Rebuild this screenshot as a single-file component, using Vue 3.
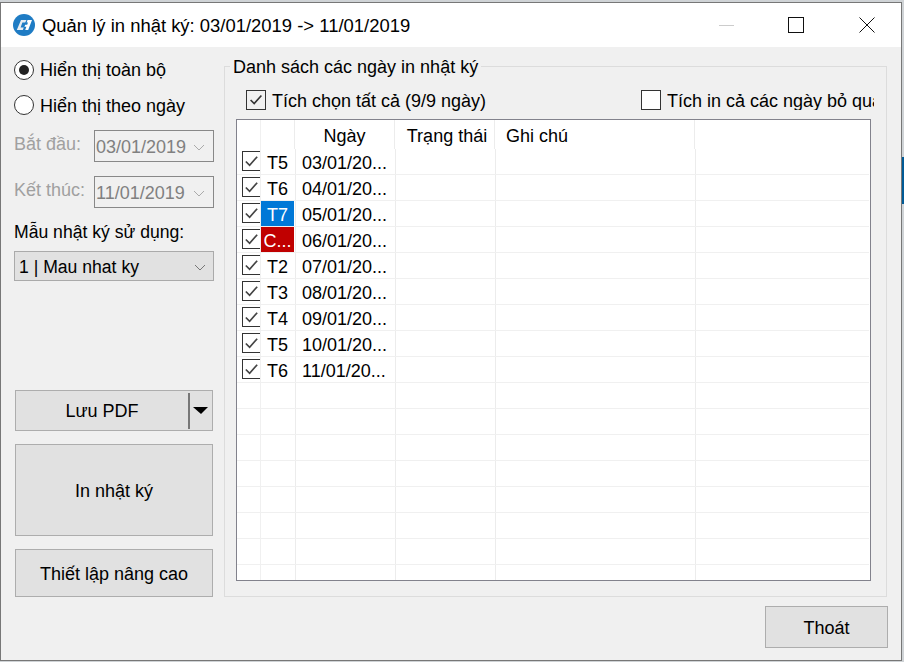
<script setup>
const rows = [
  { d: 'T5', date: '03/01/20...' },
  { d: 'T6', date: '04/01/20...' },
  { d: 'T7', date: '05/01/20...', cls: 'sat' },
  { d: 'C...', date: '06/01/20...', cls: 'sun' },
  { d: 'T2', date: '07/01/20...' },
  { d: 'T3', date: '08/01/20...' },
  { d: 'T4', date: '09/01/20...' },
  { d: 'T5', date: '10/01/20...' },
  { d: 'T6', date: '11/01/20...' },
  {}, {}, {}, {}, {}, {}, {}, {},
]
</script>

<template>
  <div class="screen">
    <div class="window">
      <header class="titlebar">
        <svg class="logo" viewBox="0 0 22 22" width="22" height="22">
          <circle cx="11" cy="11" r="11" fill="#1f7cc4" />
          <path d="M8 6h5.500l-1.300 2.600H9.400L7.600 13.400h3.200l-1 2.600H3.800z" fill="#e8edf2" />
          <path d="M14.500 6H19l-3.800 10h-3l1.200-3.200h-2l.8-2.100h2l.8-2.100h-1.300z" fill="#fff" />
        </svg>
        <span class="title">Quản lý in nhật ký: 03/01/2019 -&gt; 11/01/2019</span>
        <span class="wbtn min"></span>
        <span class="wbtn max"></span>
        <svg class="close" viewBox="0 0 16 16" width="16" height="16">
          <path d="M.5.500l15 15M15.500.500l-15 15" stroke="#111" fill="none" />
        </svg>
      </header>
      <div class="body">
        <div class="main">
          <aside class="left">
            <label class="radio first"><span class="dot on"></span>Hiển thị toàn bộ</label>
            <label class="radio second"><span class="dot"></span><span class="radiotext">Hiển thị theo ngày</span></label>
            <div class="daterow">
              <span class="lbl">Bắt đầu:</span>
              <span class="datebox">03/01/2019<svg class="chev" viewBox="0 0 12 7" width="12" height="7"><path d="M1 1l5 5 5-5" stroke="#aaa" fill="none" /></svg></span>
            </div>
            <div class="daterow low">
              <span class="lbl">Kết thúc:</span>
              <span class="datebox">11/01/2019<svg class="chev" viewBox="0 0 12 7" width="12" height="7"><path d="M1 1l5 5 5-5" stroke="#aaa" fill="none" /></svg></span>
            </div>
            <div class="tpl">Mẫu nhật ký sử dụng:</div>
            <div class="select">1 | Mau nhat ky<svg class="chev" viewBox="0 0 12 7" width="12" height="7"><path d="M1 1l5 5 5-5" stroke="#777" fill="none" /></svg></div>
            <div class="btn pdf">
              <span class="pdflabel">Lưu PDF</span>
              <span class="sep"></span>
              <span class="tri"></span>
            </div>
            <div class="btn print">In nhật ký</div>
            <div class="btn adv">Thiết lập nâng cao</div>
          </aside>
          <section class="group">
            <div class="legend">Danh sách các ngày in nhật ký</div>
            <div class="checks">
              <label class="chk"><span class="box"><svg viewBox="0 0 20 20" width="18" height="18"><path d="M4 10l4 4 8-9" stroke="#333" stroke-width="1.800" fill="none" /></svg></span>Tích chọn tất cả (9/9 ngày)</label>
              <label class="chk skip"><span class="box"></span><span class="clip">Tích in cả các ngày bỏ qua</span></label>
            </div>
            <div class="table">
              <div class="row head">
                <div class="c c0"></div>
                <div class="c c1"></div>
                <div class="c c2 ctr">Ngày</div>
                <div class="c c3 ctr status">Trạng thái</div>
                <div class="c c4">Ghi chú</div>
                <div class="c c5"></div>
              </div>
              <div v-for="(r, i) in rows" :key="i" class="row">
                <div class="c c0">
                  <span v-if="r.d" class="mini"><svg viewBox="0 0 18 18" width="17" height="17"><path d="M3 9l4 4 8-9" stroke="#444" stroke-width="1.800" fill="none" /></svg></span>
                </div>
                <div class="c c1"><span class="day" :class="r.cls">{{ r.d }}</span></div>
                <div class="c c2 datecell">{{ r.date }}</div>
                <div class="c c3"></div>
                <div class="c c4"></div>
                <div class="c c5"></div>
              </div>
            </div>
          </section>
        </div>
        <div class="foot"><div class="btn exit">Thoát</div></div>
      </div>
    </div>
  </div>
</template>

<style>
html, body { margin: 0; background: #d9d9d9; overflow: hidden; }
</style>

<style scoped>
.screen {
  width: 904px; height: 662px; box-sizing: border-box; padding: 3px 3px 2px 1px;
  background: linear-gradient(#cfd3d6 157px, #005a96 157px, #005a96 204px, #cfd3d6 204px);
  font-family: "Liberation Sans", Arial, sans-serif; font-size: 18px; color: #000;
}
.window { height: 100%; display: flex; flex-direction: column; box-shadow: 0 0 0 1px #777; }
.titlebar { height: 44px; flex: none; background: #fff; display: flex; align-items: center; padding-left: 12px; position: relative; }
.logo { flex: none; margin-right: 7px; }
.title { flex: 1; font-size: 18.450px; white-space: nowrap; padding-top: 2px; }
.wbtn.min { width: 15px; height: 1px; background: #ccc; margin-right: 54px; }
.wbtn.max { width: 14px; height: 14px; border: 1px solid #111; margin-right: 55px; }
.close { margin-right: 26px; }
.body { flex: 1; background: #f0f0f0; display: flex; flex-direction: column; min-height: 0; }
.main { display: flex; padding: 0 0 0 13px; }
.left { width: 200px; flex: none; display: flex; flex-direction: column; margin-right: 10px; }
.radio { display: flex; align-items: center; height: 20px; gap: 6px; white-space: nowrap; }
.radio.first { margin-top: 13px; }
.radio.second { margin-top: 15px; }
.radiotext { padding-top: 2px; }
.dot { width: 18px; height: 18px; border: 1px solid #333; border-radius: 50%; background: #fff; position: relative; flex: none; }
.dot.on::after { content: ""; position: absolute; inset: 4px; border-radius: 50%; background: #222; }
.daterow { display: flex; align-items: center; justify-content: space-between; margin-top: 15px; }
.daterow.low { margin-top: 14px; }
.lbl { color: #a0a0a0; position: relative; top: -2px; white-space: nowrap; }
.datebox {
  width: 120px; height: 32px; box-sizing: border-box; border: 1px solid #888; background: #f0f0f0;
  color: #808080; display: flex; align-items: center; justify-content: space-between; padding: 2px 8px 0 1px;
}
.tpl { margin-top: 14px; height: 20px; line-height: 20px; white-space: nowrap; font-size: 17.600px; }
.select {
  margin-top: 9px; height: 30px; box-sizing: border-box; border: 1px solid #aaa; background: #e1e1e1; font-size: 17.600px;
  display: flex; align-items: center; justify-content: space-between; padding: 2px 7px 0 4px;
}
.btn { background: #e1e1e1; border: 1px solid #adadad; box-sizing: border-box; display: flex; align-items: center; justify-content: center; white-space: nowrap; padding-top: 2px; }
.pdf { margin: 109px 1px 0; height: 41px; position: relative; padding-top: 0; }
.pdflabel { flex: 1; text-align: center; padding-top: 2px; }
.sep { width: 2px; height: 36px; background: #777; margin-right: 3px; }
.tri { width: 0; height: 0; border-left: 8px solid transparent; border-right: 7px solid transparent; border-top: 7px solid #000; margin-right: 4px; }
.print { margin: 13px 1px 0; height: 92px; }
.adv { margin: 13px 1px 0; height: 48px; }
.group { width: 663px; height: 531px; box-sizing: border-box; border: 1px solid #dcdcdc; margin-top: 19px; position: relative; flex: none; }
.legend { position: absolute; left: 5px; top: -10px; background: #f0f0f0; padding: 0 3px; line-height: 20px; white-space: nowrap; }
.checks { display: flex; padding: 23px 12px 0 21px; height: 52px; box-sizing: border-box; justify-content: space-between; }
.chk { display: flex; align-items: flex-start; gap: 6px; height: 20px; line-height: 22px; white-space: nowrap; }
.box { width: 18px; height: 18px; border: 1px solid #333; background: #f0f0f0; flex: none; display: flex; align-items: center; justify-content: center; }
.skip { width: 233px; overflow: hidden; }
.skip .box { background: #fff; }
.clip { overflow: hidden; }
.table { margin-left: 11px; width: 635px; height: 462px; box-sizing: border-box; border: 1px solid #82828c; background: #fff; overflow: hidden; }
.row { display: flex; height: 26px; box-sizing: border-box; border-bottom: 1px solid #f0f0f0; margin-right: 1px; }
.row.head { height: 29px; border-bottom: 0; }
.c { box-sizing: border-box; border-right: 1px solid #ececec; display: flex; align-items: center; white-space: nowrap; }
.c0 { width: 23px; padding-left: 5px; border-right: 0; align-items: flex-start; }
.c1 { width: 36px; border-left: 1px solid #f0f0f0; padding-right: 1px; }
.c2 { width: 100px; padding-left: 6px; }
.c3 { width: 100px; }
.c4 { width: 200px; padding-left: 10px; }
.c5 { flex: 1; border-right: 0; }
.ctr { justify-content: center; padding-left: 0; }
.head .c { padding-top: 4px; }
.head .c1 { width: 35px; }
.head .c4 { padding-left: 11px; }
.head .status { padding-left: 5px; }
.mini { width: 18px; height: 20px; box-sizing: border-box; border: 1px solid #333; border-right: 0; display: flex; align-items: center; justify-content: center; background: #fff; margin-top: 2px; }
.day { display: block; width: 100%; height: 25px; line-height: 28px; text-align: center; overflow: hidden; }
.datecell { padding-top: 4px; }
.sat { background: #0078d7; color: #fff; }
.sun { background: #c00000; color: #fff; }
.foot { display: flex; justify-content: flex-end; padding: 9px 13px 0 0; }
.exit { width: 123px; height: 42px; }
</style>
